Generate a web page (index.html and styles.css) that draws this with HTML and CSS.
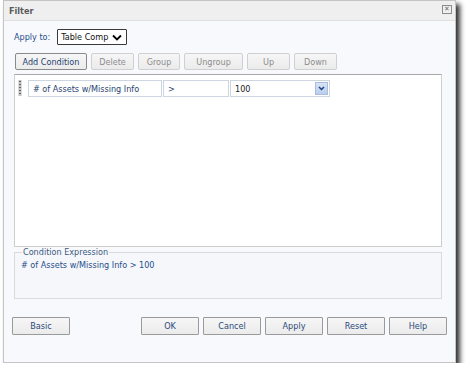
FILE: index.html
```html
<!DOCTYPE html>
<html lang="en">
<head>
    <meta charset="UTF-8">
    <title>Filter</title>
    <link rel="stylesheet" href="styles.css">
</head>
<body>
    <div class="dialog">
        <div class="title-bar">
            <span class="title">Filter</span>
            <span class="close">&#x2715;</span>
        </div>
        <div class="content">
            <div class="apply-row">
                <span class="label">Apply to:</span>
                <div class="select">
                    <span>Table Comp</span>
                    <svg width="10" height="7" viewBox="0 0 10 7"><path d="M1 1.5 L5 5.5 L9 1.5" fill="none" stroke="#000" stroke-width="1.8"/></svg>
                </div>
            </div>
            <div class="toolbar">
                <button class="btn active w-add">Add Condition</button>
                <button class="btn w-del">Delete</button>
                <button class="btn w-grp">Group</button>
                <button class="btn w-ungrp">Ungroup</button>
                <button class="btn w-up">Up</button>
                <button class="btn w-down">Down</button>
            </div>
            <div class="conditions">
                <div class="cond-row">
                    <div class="handle"></div>
                    <div class="cell c-field"># of Assets w/Missing Info</div>
                    <div class="cell c-op">&gt;</div>
                    <div class="cell c-val">
                        <span>100</span>
                        <span class="drop">
                            <svg width="7" height="5" viewBox="0 0 7 5"><path d="M1 1 L3.5 3.5 L6 1" fill="none" stroke="#1d3f7a" stroke-width="1.5"/></svg>
                        </span>
                    </div>
                </div>
            </div>
            <fieldset class="expression">
                <legend>Condition Expression</legend>
                <div class="expr-text"># of Assets w/Missing Info &gt; 100</div>
            </fieldset>
        </div>
        <div class="footer">
            <button class="btn foot">Basic</button>
            <div class="foot-right">
                <button class="btn foot">OK</button>
                <button class="btn foot">Cancel</button>
                <button class="btn foot">Apply</button>
                <button class="btn foot">Reset</button>
                <button class="btn foot">Help</button>
            </div>
        </div>
    </div>
</body>
</html>
```

FILE: styles.css
```css
* {
    box-sizing: border-box;
    margin: 0;
    padding: 0;
}

body {
    background-color: #ffffff;
    font-family: Tahoma, "DejaVu Sans Condensed", "Liberation Sans", sans-serif;
    font-size: 9px;
}

.dialog {
    margin-left: 3px;
    width: 453px;
    height: 363px;
    background-color: #f8f9fc;
    border: 1px solid #c4c4c4;
    box-shadow: 4px 4px 5px rgba(0, 0, 0, 0.8);
    display: flex;
    flex-direction: column;
}

.title-bar {
    height: 20px;
    background-color: #efefef;
    border-bottom: 1px solid #e0e0e0;
    display: flex;
    justify-content: space-between;
    align-items: center;
    padding: 0 3px 0 5px;
}

.title {
    font-weight: bold;
    color: #5a5a5a;
    font-size: 9px;
}

.close {
    width: 10px;
    height: 9px;
    border: 1px solid #8c8c8c;
    font-size: 7px;
    line-height: 7px;
    text-align: center;
    color: #666;
    margin-top: -3px;
}

.content {
    padding: 8px 13px 0 10px;
    display: flex;
    flex-direction: column;
}

.apply-row {
    display: flex;
    align-items: center;
    height: 16px;
}

.label {
    color: #1f4e8c;
    margin-right: 7px;
}

.select {
    width: 70px;
    height: 16px;
    border: 1px solid #3a3a3a;
    background-color: #ffffff;
    border-radius: 1px;
    display: flex;
    align-items: center;
    justify-content: space-between;
    padding: 0 4px 0 3px;
    color: #111;
}

.toolbar {
    display: flex;
    gap: 4px;
    margin-top: 8px;
    padding-left: 1px;
}

.btn {
    height: 17px;
    background: linear-gradient(#f6f6f6, #ebebeb);
    border: 1px solid #d0d0d0;
    border-radius: 2px;
    color: #8c8c8c;
    font-family: inherit;
    font-size: 9px;
}

.btn.active {
    border-color: #8a8a8a;
    color: #1f3f70;
}

.w-add { width: 72px; }
.w-del { width: 43px; }
.w-grp { width: 42px; }
.w-ungrp { width: 59px; }
.w-up { width: 43px; }
.w-down { width: 43px; }

.conditions {
    margin-top: 4px;
    height: 173px;
    background-color: #ffffff;
    border: 1px solid #cfcfcf;
    border-top-color: #a8a8a8;
    padding: 5px 0 0 3px;
}

.cond-row {
    display: flex;
    height: 17px;
}

.handle {
    width: 4px;
    height: 16px;
    margin-right: 6px;
    background-image: radial-gradient(circle, #666 0.8px, transparent 1.2px);
    background-size: 4px 3px;
    background-color: #dcdcdc;
}

.cell {
    height: 17px;
    border: 1px solid #cdd5e0;
    background-color: #ffffff;
    color: #1f3f70;
    display: flex;
    align-items: center;
    padding-left: 4px;
    margin-right: 1px;
}

.c-field { width: 134px; }
.c-op { width: 66px; }

.c-val {
    width: 100px;
    justify-content: space-between;
    padding-right: 1px;
    color: #222;
}

.drop {
    width: 13px;
    height: 13px;
    background: linear-gradient(#d8e4f6, #b9cdee);
    border: 1px solid #a9bde0;
    display: flex;
    align-items: center;
    justify-content: center;
}

.expression {
    height: 52px;
    border: 1px solid #dadada;
    background-color: #f6f7fa;
    padding: 0 6px;
}

.expression legend {
    color: #3a5a80;
    padding: 0 1px;
    margin-left: 1px;
}

.expr-text {
    color: #1f4e8c;
    margin-top: 3px;
}

.footer {
    display: flex;
    justify-content: space-between;
    padding: 0 8px;
    margin-top: 18px;
}

.foot-right {
    display: flex;
    gap: 4px;
}

.btn.foot {
    width: 58px;
    height: 18px;
    border: 1px solid #9a9a9a;
    color: #2b4a7a;
    border-radius: 1px;
}
```
